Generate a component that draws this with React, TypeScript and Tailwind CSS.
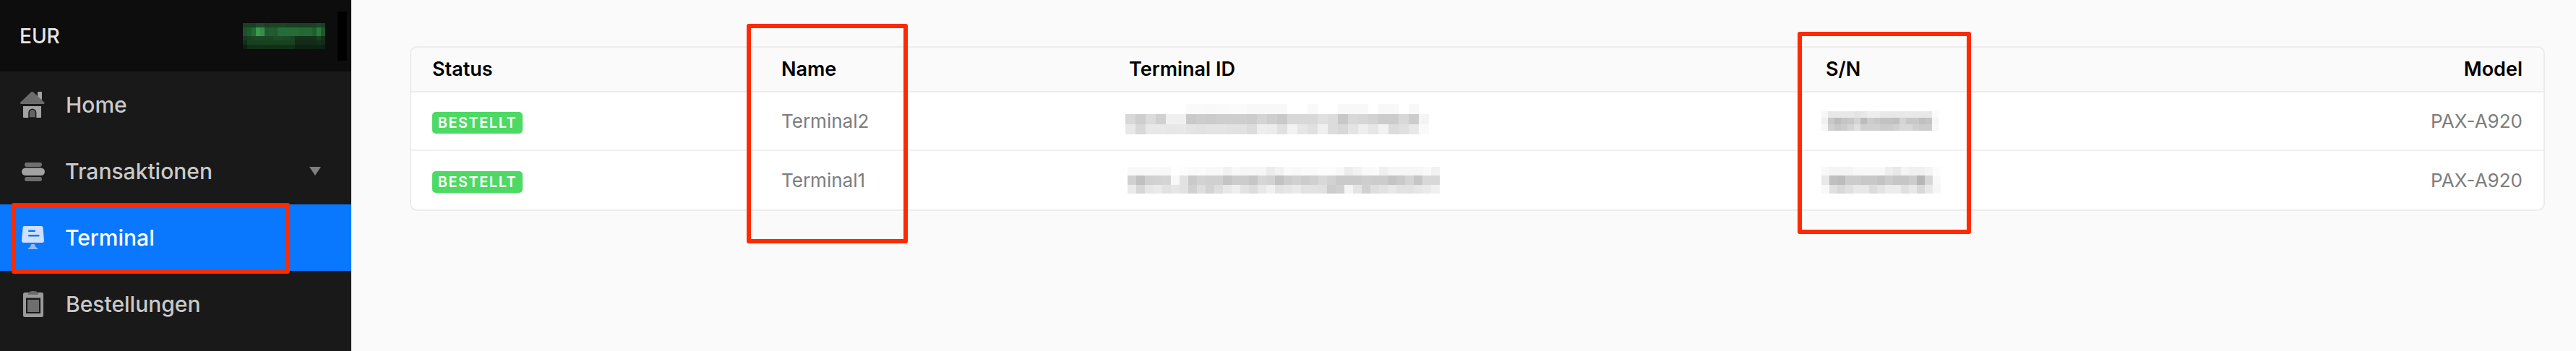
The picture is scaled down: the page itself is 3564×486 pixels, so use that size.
import React from 'react';

const font = { fontFamily: 'Inter, "Liberation Sans", sans-serif' };

type MosaicProps = { rows: string[]; cell: number; height: number };

// redacted text is a grid of flat colour blocks, each row is a run of 2-digit greys
function GreyMosaic({ rows, cell, height }: MosaicProps) {
  return (
    <div className="flex flex-col">
      {rows.map((row, r) => (
        <div key={r} className="flex">
          {row.split(' ').map((v, c) => (
            <span
              key={c}
              className="block shrink-0"
              style={{ width: cell, height, background: `#${v}${v}${v}` }}
            />
          ))}
        </div>
      ))}
    </div>
  );
}

const idRow1 = [
  'ff ff ff ff ff ff fa fa f9 fa fb fb f8 f8 f8 f8 ff ff f9 ff ff f8 f8 f8 ff f8 f8 ff f8 ff',
  'd8 ce dc d0 f0 f0 c9 cd cb ce ce ce cc d4 ce c9 d8 d8 d8 e0 dc c8 d8 d6 d2 cc cc d8 cc f4',
  'e8 d8 e8 e8 e6 e8 e4 e2 e4 e4 e2 e2 dc ee ec e0 f2 e6 e0 f0 dc d8 e4 ee e6 f2 dc e0 e8 fa',
];
const idRow2 = [
  'f8 f8 f8 f8 f8 ff fc fa fb f8 f8 f2 f8 f6 f6 f6 ec f2 fa f8 fa fa fc fc f8 ec f2 f9 fa ef f6 f6 f6 f6 f9 f2',
  'd0 c0 d0 d2 d4 f8 e2 ca d2 d0 d0 c4 cc cc c6 d6 d2 c2 cc d0 cc d0 d8 d2 ca ca ca ce cc cc c4 ca d4 c6 d8 d8',
  'ea d6 e6 ea e2 e6 e2 d0 de d2 de e8 ee e2 dc e8 f0 e2 e6 ea e2 e2 e0 cc d0 f4 e4 d0 de e2 e8 e2 e2 e6 ea f0',
];
const snRow1 = [
  'f6 e8 e8 e8 e8 e4 e8 ee ee e8 e8 e8 e8 ea e8 e8 e8 fa',
  'f0 c8 bc c4 c8 d4 bc cc c8 c2 c2 c0 d4 c8 c8 c0 c4 f6',
  'f6 d0 c8 cc d4 e0 d0 d0 d0 cc cc d0 d8 d8 d0 cc cc f8',
];
const snRow2 = [
  'f8 f4 f4 f4 f8 f8 f8 f8 ee e8 f4 f0 f0 f4 fc',
  'e8 c0 bc cc cc c8 c8 c4 cc c6 c6 cc b6 d6 f8',
  'f8 e0 d8 e0 e8 e8 dc e4 ec ec e0 e8 d8 e8 f6',
];

const green = [
  '1a3f22 1a4024 1a4024 1f4a2a 1f4a2a 1a3f22 1b4424 1b4424 1b4424 1b4424 1a4024 1a4024 1a4024 1a4024 1a4024 1a4024 1a4024 1c4826 1a3f22',
  '1d5029 1f5a2e 226b35 3a9a4e 358d48 1f5a2e 215c32 205a2e 266c38 266c38 266c38 266c38 266c38 246836 246836 246836 205e30 2a7a3c 1f5a2e',
  '1d5029 1f5a2e 226b35 3a9a4e 358d48 1f5a2e 215c32 205a2e 266c38 266c38 266c38 266c38 266c38 246836 246836 246836 205e30 2a7a3c 1f5a2e',
  '143a1d 17401f 1a4522 1b4724 1b4724 1b4423 1b4423 1e4a26 1e4a26 1d4825 1d4825 1b4423 143019 143019 143019 143019 153219 1a3e20 143019',
  '122f19 17401f 17401f 17401f 17401f 18421f 18421f 18421f 18421f 18421f 18421f 18421f 122a17 122a17 122a17 122a17 122a17 142e19 122a17',
  '0e1f13 123018 123018 123018 123018 123018 123018 123018 123018 123018 123018 123018 0f2014 0f2014 0f2014 0f2014 0f2014 102216 0f2014',
];

function HomeIcon() {
  return (
    <svg viewBox="0 0 50 50" className="w-[50px] h-[50px] shrink-0">
      <rect x="32" y="7" width="6" height="11" rx="1" fill="#a3a3a3" />
      <path d="M23 7.500c.8-.7 2.200-.7 3 0L41 21.500c1 1 .6 2.500-1 2.500H9.500c-1.600 0-2-1.500-1-2.500z" fill="#6b6b6b" />
      <path d="M12 27h25v15a1 1 0 0 1-1 1H13a1 1 0 0 1-1-1z" fill="#a3a3a3" />
      <path d="M20 43V36a4.800 4.800 0 0 1 9.600 0v7z" fill="#636363" stroke="#191919" strokeWidth="1.500" />
    </svg>
  );
}

function TransactionsIcon() {
  return (
    <svg viewBox="0 0 50 50" className="w-[50px] h-[50px] shrink-0">
      <rect x="14" y="13" width="24" height="6" rx="3" fill="#6f6f6f" />
      <rect x="10" y="20.500" width="32" height="10.500" rx="5.250" fill="#a3a3a3" />
      <rect x="14" y="33" width="24" height="6" rx="3" fill="#6f6f6f" />
    </svg>
  );
}

function TerminalIcon() {
  return (
    <svg viewBox="0 0 50 50" className="w-[50px] h-[50px] shrink-0">
      <path d="M14 9h23c1.600 0 2.300.8 2.400 2.200L41 29c.1 1.800-.9 3-2.500 3h-26c-1.600 0-2.600-1.200-2.500-3l1.600-17.800C11.700 9.800 12.400 9 14 9z" fill="#cfe0ff" />
      <rect x="19" y="14.500" width="10" height="2.500" rx="1.250" fill="#0a77ff" />
      <rect x="19" y="21" width="15.500" height="2.500" rx="1.250" fill="#0a77ff" />
      <path d="M23.500 34h4l2 4 2.500 2c.4.4.2 1-.4 1H19.400c-.6 0-.8-.6-.4-1l2.500-2z" fill="#8fbcff" />
    </svg>
  );
}

function OrdersIcon() {
  return (
    <svg viewBox="0 0 50 50" className="w-[50px] h-[50px] shrink-0">
      <rect x="12" y="9" width="28" height="34" rx="2.500" fill="#9a9a9a" />
      <path d="M19 11c0-2.500 3-4 7-4s7 1.500 7 4v1H19z" fill="#6b6b6b" />
      <rect x="16" y="16.500" width="20" height="21.500" fill="#191919" />
      <rect x="18" y="19" width="16" height="17" fill="#6f6f6f" />
    </svg>
  );
}

function NavRow({
  icon,
  label,
  active,
  labelClass,
  caret,
}: {
  icon: React.ReactNode;
  label: string;
  active?: boolean;
  labelClass?: string;
  caret?: boolean;
}) {
  return (
    <div className={`flex items-center h-[92px] pl-[20px] pr-[42px] ${active ? 'bg-[#0a77ff]' : ''}`}>
      {icon}
      <span
        className={`text-[30px] font-medium ml-[20px] ${active ? 'text-white' : 'text-[#c9c9c9]'} ${labelClass ?? ''}`}
      >
        {label}
      </span>
      {caret && (
        <span className="ml-auto w-0 h-0 border-l-[8px] border-r-[8px] border-t-[12px] border-l-transparent border-r-transparent border-t-[#808080]" />
      )}
    </div>
  );
}

const columns = 'grid grid-cols-[483px_481px_964px_1fr] items-center px-[29px]';

function Badge({ offset }: { offset: string }) {
  return (
    <span
      className={`inline-flex items-center justify-center w-[125px] h-[30px] rounded-[5px] bg-[#4cd964] text-white text-[20px] font-semibold tracking-[1.500px] ${offset}`}
    >
      BESTELLT
    </span>
  );
}

export default function App() {
  return (
    <div className="relative flex h-[486px] w-[3564px] overflow-hidden bg-[#fafafa]" style={font}>
      <aside className="flex flex-col w-[486px] shrink-0 bg-[#191919]">
        <div className="relative flex items-center justify-between h-[99px] pl-[27px] bg-[#0d0d0d]">
          <span className="text-[28px] font-medium text-[#e6e6e6]">EUR</span>
          <div className="flex items-center mr-[6px]">
            <div className="flex flex-col">
              {green.map((row, r) => (
                <div key={r} className="flex">
                  {row.split(' ').map((c, i) => (
                    <span key={i} className="block w-[6px] h-[6px]" style={{ background: `#${c}` }} />
                  ))}
                </div>
              ))}
            </div>
            <div className="w-[17px]" />
            <div className="w-[13px] h-[68px] bg-black" />
          </div>
        </div>
        <NavRow icon={<HomeIcon />} label="Home" labelClass="ml-[21px]" />
        <NavRow icon={<TransactionsIcon />} label="Transaktionen" caret />
        <NavRow icon={<TerminalIcon />} label="Terminal" active />
        <NavRow icon={<OrdersIcon />} label="Bestellungen" labelClass="ml-[21px]" />
      </aside>

      <main className="flex-1 pl-[81px] pr-[43px] pt-[64px]">
        <div className="border-2 border-[#ececec] rounded-[10px] overflow-hidden bg-white">
          <div className={`${columns} h-[60px] bg-[#fafafa] text-black text-[27px] font-semibold`}>
            <span>Status</span>
            <span>Name</span>
            <span>Terminal ID</span>
            <div className="flex justify-between">
              <span>S/N</span>
              <span>Model</span>
            </div>
          </div>
          <div className={`${columns} h-[81px] border-t-2 border-[#ececec] text-[26px] text-[#7d7d7d]`}>
            <div>
              <Badge offset="mt-[7px]" />
            </div>
            <span>Terminal2</span>
            <div className="-ml-[5px] -mt-[5px]">
              <GreyMosaic rows={idRow1} cell={14} height={14.300} />
            </div>
            <div className="flex justify-between items-center -ml-[6px]">
              <GreyMosaic rows={snRow1} cell={9} height={8.700} />
              <span>PAX-A920</span>
            </div>
          </div>
          <div className={`${columns} h-[83px] border-t-2 border-[#f0f0f0] text-[26px] text-[#7d7d7d]`}>
            <div>
              <Badge offset="mt-[7px]" />
            </div>
            <span>Terminal1</span>
            <div className="-ml-[2px]">
              <GreyMosaic rows={idRow2} cell={12} height={12.300} />
            </div>
            <div className="flex justify-between items-center -ml-[6px]">
              <GreyMosaic rows={snRow2} cell={11} height={12.300} />
              <span>PAX-A920</span>
            </div>
          </div>
        </div>
      </main>

      {/* red annotation boxes drawn on top of the screenshot */}
      <div className="absolute left-[16px] top-[281px] w-[385px] h-[98px] border-[6px] border-[#ff2a00] rounded-[3px]" />
      <div className="absolute left-[1033px] top-[33px] w-[223px] h-[304px] border-[6px] border-[#ff2a00] rounded-[3px]" />
      <div className="absolute left-[2487px] top-[44px] w-[240px] h-[280px] border-[6px] border-[#ff2a00] rounded-[3px]" />
    </div>
  );
}
